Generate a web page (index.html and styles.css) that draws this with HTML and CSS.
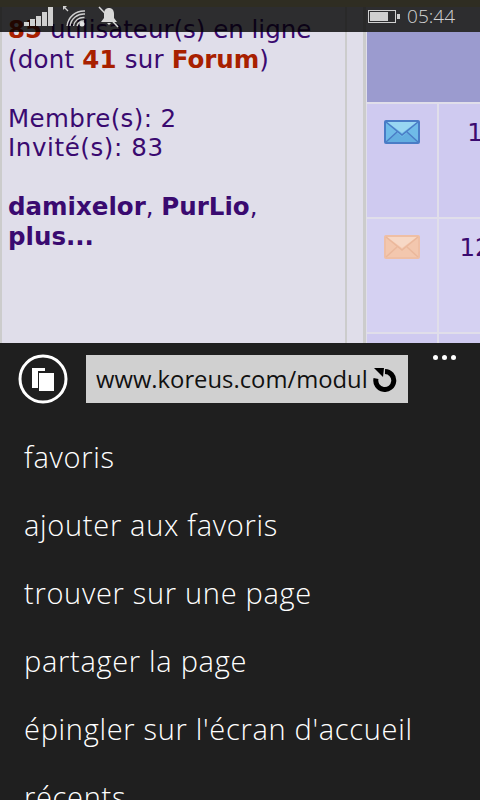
FILE: index.html
```html
<!DOCTYPE html>
<html lang="fr">
<head>
<meta charset="utf-8">
<title>Koreus</title>
<link rel="stylesheet" href="styles.css">
</head>
<body>
<div class="phone">
  <div class="status">
    <div class="status-left">
      <svg class="sig" width="30" height="20" viewBox="0 0 30 20"><g fill="#d0d0d0"><rect x="0" y="15" width="5" height="4"/><rect x="6" y="12" width="5" height="7"/><rect x="12" y="9" width="5" height="10"/><rect x="18" y="5" width="5" height="14"/><rect x="24" y="0" width="5" height="19"/></g></svg>
      <svg class="wifi" width="24" height="22" viewBox="0 0 24 22"><g fill="none" stroke="#d0d0d0" stroke-width="1.5"><path d="M4 20a17 17 0 0 1 18-15"/><path d="M7 20a14 14 0 0 1 15-12"/><path d="M10.500 20a10 10 0 0 1 11-8.500"/><path d="M14 20a7 7 0 0 1 7-5"/><path d="M1 1l4 4" stroke-width="1.200"/></g><path d="M0 0h4l-4 4z" fill="#d0d0d0"/><circle cx="19" cy="18" r="2.500" fill="#e4e4e4"/></svg>
      <svg class="bell" width="22" height="22" viewBox="0 0 22 22"><path d="M11 2c3 0 5 2 5 6v4l3 4H3l3-4V8c0-4 2-6 5-6zM9 17h4l-2 2z" fill="#d8d8d8"/><path d="M1 1l19 20" stroke="#d8d8d8" stroke-width="1.500"/></svg>
    </div>
    <div class="status-right">
      <div class="battery"><div class="battery-level"></div></div>
      <div class="battery-tip"></div>
      <span class="time">05:44</span>
    </div>
  </div>

  <div class="web">
    <div class="strip"></div>
    <div class="columns">
      <div class="panel">
        <p class="block"><b class="red">85</b> utilisateur(s) en ligne<br><span class="loose">(dont <b class="red">41</b> sur </span><b class="red">Forum</b>)</p>
        <p class="block"><span class="wide">Membre(s): 2</span><br><span class="wider">Invité(s): 83</span></p>
        <p class="block"><b>damixelor</b>, <b>PurLio</b>,<br><b>plus...</b></p>
      </div>
      <div class="gutter"></div>
      <div class="table">
        <div class="thead"></div>
        <div class="cell c1">
          <svg class="env" width="36" height="24" viewBox="0 0 36 24"><rect width="36" height="24" rx="2" fill="#4a7cc6"/><rect x="2" y="2" width="32" height="20" fill="#6fbbe8"/><path d="M3 2h30L18 13z" fill="#98d6f2"/><path d="M3 22l10-9 5 4 5-4 10 9z" fill="#63aee0"/><path d="M2 2l16 13L34 2M2 22l11-10M34 22L23 12" fill="none" stroke="#4a7cc6" stroke-width="1.500"/></svg>
        </div>
        <div class="cell c1 num">1</div>
        <div class="cell c2">
          <svg class="env" width="36" height="24" viewBox="0 0 36 24"><rect width="36" height="24" rx="2" fill="#efbfa5"/><rect x="2" y="2" width="32" height="20" fill="#f3c7ae"/><path d="M3 2h30L18 13z" fill="#f7d8c6"/><path d="M2 2l16 13L34 2M2 22l11-10M34 22L23 12" fill="none" stroke="#ebb89c" stroke-width="1.500"/></svg>
        </div>
        <div class="cell c2 num">12</div>
        <div class="cell c1"></div>
        <div class="cell c1"></div>
      </div>
    </div>
  </div>

  <div class="appbar">
    <div class="addr">
      <svg class="tabs" width="50" height="50" viewBox="0 0 50 50"><circle cx="25" cy="25" r="23" fill="none" stroke="#fff" stroke-width="3"/><path d="M14 14h13v3h-7v17h-6z" fill="#fff"/><rect x="21" y="19" width="15" height="18" fill="#fff"/></svg>
      <div class="url">
        <span class="url-text">www.koreus.com/modules/newbb/</span>
        <svg class="reload" width="26" height="26" viewBox="0 0 26 26"><path d="M14 5.500a9 9 0 1 1-9 7" fill="none" stroke="#000" stroke-width="5"/><path d="M3 2h10l-1 9z" fill="#000"/></svg>
      </div>
      <div class="dots"><i></i><i></i><i></i></div>
    </div>
    <ul class="menu">
      <li>favoris</li>
      <li>ajouter aux favoris</li>
      <li>trouver sur une page</li>
      <li>partager la page</li>
      <li>épingler sur l'écran d'accueil</li>
      <li>récents</li>
    </ul>
  </div>
</div>
</body>
</html>
```
FILE: styles.css
```css
html, body {
  margin: 0;
  padding: 0;
  height: 800px;
  overflow: hidden;
  background: #1f1f1f;
}
.phone {
  position: relative;
  width: 480px;
  height: 800px;
  overflow: hidden;
  display: flex;
  flex-direction: column;
}
.status {
  position: absolute;
  top: 0;
  left: 0;
  right: 0;
  height: 32px;
  background: rgba(0, 0, 0, 0.8);
  display: flex;
  justify-content: space-between;
  align-items: flex-start;
  z-index: 2;
}
.status-left {
  display: flex;
  align-items: flex-start;
  padding: 7px 0 0 24px;
}
.wifi { margin-left: 9px; margin-top: -1px; }
.bell { margin-left: 11px; margin-top: -1px; }
.status-right {
  display: flex;
  align-items: center;
  height: 32px;
  padding-right: 25px;
}
.battery {
  width: 28px;
  height: 13px;
  box-sizing: border-box;
  border: 1px solid #d0d0d0;
  padding: 1px;
}
.battery-level { width: 18px; height: 100%; background: #d0d0d0; }
.battery-tip { width: 3px; height: 5px; background: #d0d0d0; margin-left: 1px; }
.time {
  font: 300 19px "Open Sans", sans-serif;
  color: #d4d4d4;
  margin-left: 7px;
}
.web {
  height: 343px;
  flex: none;
  overflow: hidden;
  background: #e0deea;
  font: 24.500px/29.500px "DejaVu Sans", sans-serif;
  color: #3a0a70;
}
.strip { height: 7px; background: #e8dfa8; }
.columns { display: flex; height: 336px; }
.panel {
  width: 337px;
  flex: none;
  padding: 8px 0 0 8px;
  box-shadow: inset 2px 0 0 #cccccc;
  white-space: nowrap;
}
.block { margin: 0 0 29.500px; }
.red { color: #a82000; }
.loose { letter-spacing: 0.200px; }
.wide { letter-spacing: 0.400px; }
.wider { letter-spacing: 0.600px; }
.gutter {
  width: 16px;
  flex: none;
  border-left: 2px solid #cccccc;
  border-right: 3px solid #cccccc;
}
.table {
  margin-left: 1px;
  display: grid;
  grid-template-columns: 70px 72px;
  grid-template-rows: 102px 113px 113px 40px;
  column-gap: 2px;
  row-gap: 2px;
  margin-top: -7px;
  height: 343px;
  flex: none;
  width: 144px;
}
.thead { grid-column: 1 / 3; background: #9b9bcf; margin-top: 32px; height: 70px; }
.cell {
  display: flex;
  justify-content: center;
  padding-top: 16px;
  box-sizing: border-box;
}
.c1 { background: #cfcaf0; }
.c2 { background: #d5d1f2; }
.num { line-height: 29px; padding-top: 14px; }
.env { display: block; }
.appbar {
  flex: 1;
  background: #1f1f1f;
  color: #fff;
  font-family: "Open Sans", sans-serif;
}
.addr {
  display: flex;
  align-items: flex-start;
  padding: 12px 0 0 18px;
}
.tabs { margin-top: -1px; }
.url {
  width: 322px;
  height: 48px;
  margin-left: 18px;
  box-sizing: border-box;
  padding: 0 10px 0 10px;
  background: #d0d0d0;
  color: #111;
  display: flex;
  align-items: center;
  font-size: 23.800px;
}
.url-text { width: 272px; overflow: hidden; white-space: nowrap; flex: none; }
.reload { flex: none; margin-left: 3px; }
.dots { display: flex; gap: 4px; margin: 0 0 0 25px; }
.dots i { width: 5px; height: 5px; border-radius: 50%; background: #fff; }
.menu {
  list-style: none;
  margin: 19px 0 0;
  padding: 0 0 0 24px;
  font-size: 29px;
  font-weight: 300;
  letter-spacing: 0.700px;
}
.menu li { height: 68px; line-height: 68px; white-space: nowrap; }
```
